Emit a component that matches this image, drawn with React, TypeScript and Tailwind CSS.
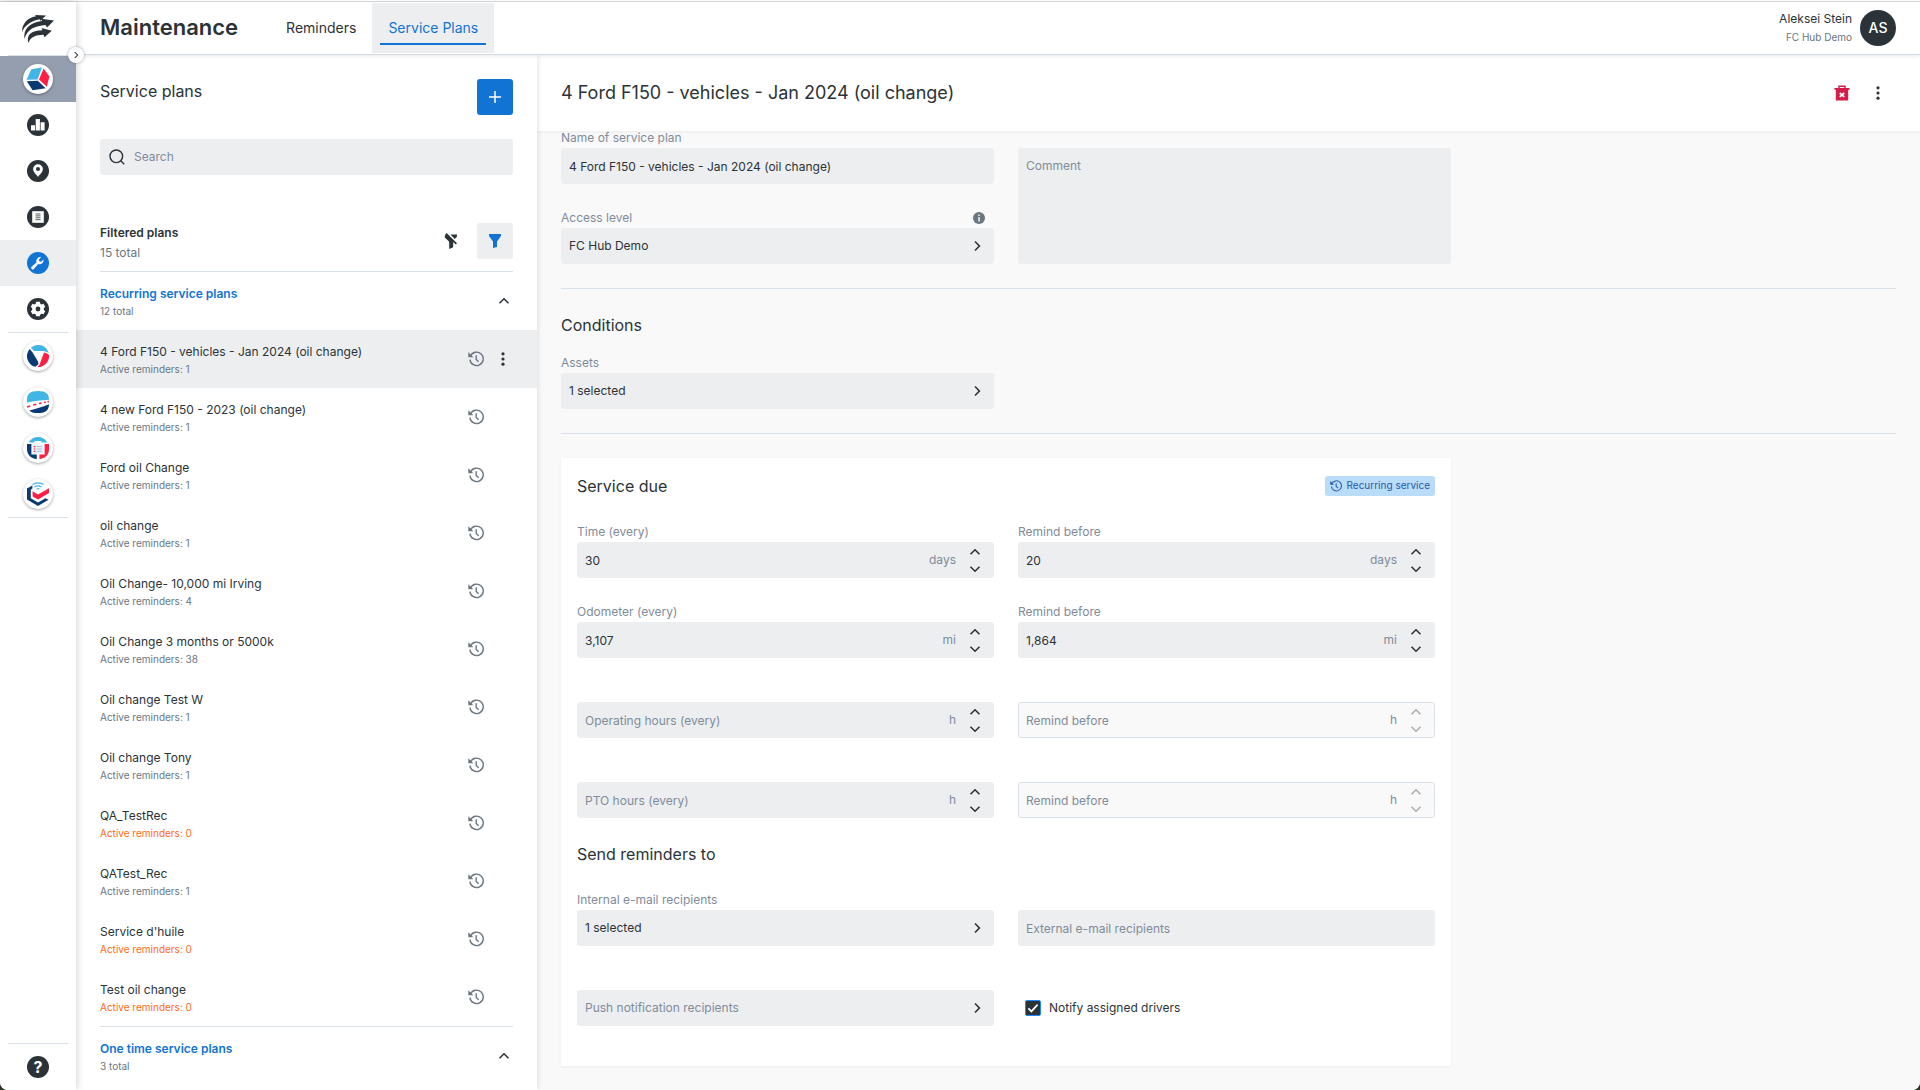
import { useState, type ReactNode } from "react";
import clsx from "clsx";

interface Plan {
  id: number;
  name: string;
  reminders: number;
}

const recurringPlans: Plan[] = [
  { id: 1, name: "4 Ford F150 - vehicles - Jan 2024 (oil change)", reminders: 1 },
  { id: 2, name: "4 new Ford F150 - 2023 (oil change)", reminders: 1 },
  { id: 3, name: "Ford oil Change", reminders: 1 },
  { id: 4, name: "oil change", reminders: 1 },
  { id: 5, name: "Oil Change- 10,000 mi Irving", reminders: 4 },
  { id: 6, name: "Oil Change 3 months or 5000k", reminders: 38 },
  { id: 7, name: "Oil change Test W", reminders: 1 },
  { id: 8, name: "Oil change Tony", reminders: 1 },
  { id: 9, name: "QA_TestRec", reminders: 0 },
  { id: 10, name: "QATest_Rec", reminders: 1 },
  { id: 11, name: "Service d'huile", reminders: 0 },
  { id: 12, name: "Test oil change", reminders: 0 },
];

/* ---------- Icons ---------- */

type ChevronProps = {
  direction: "up" | "down" | "right";
  className?: string;
};

const chevronPaths = {
  up: "M1.5 8.2 6 3.8l4.5 4.4",
  down: "M1.5 3.8 6 8.2l4.5-4.4",
  right: "M4 1.5 8.4 6 4 10.5",
};

function Chevron({ direction, className = "size-3" }: ChevronProps) {
  return (
    <svg viewBox="0 0 12 12" className={className} fill="none" aria-hidden="true">
      <path d={chevronPaths[direction]} stroke="currentColor" strokeWidth="1.6" />
    </svg>
  );
}

function HistoryIcon({ className = "size-4" }: { className?: string }) {
  return (
    <svg viewBox="0 0 16 16" className={className} fill="none" aria-hidden="true">
      <path
        d="M2.4 5.2A6.7 6.7 0 1 1 1.9 8.6"
        stroke="currentColor"
        strokeWidth="1.4"
      />
      <path d="M.3 1.2v5h5z" fill="currentColor" />
      <path d="M8.2 4.2v4.2l2.4 2.4" stroke="currentColor" strokeWidth="1.4" />
    </svg>
  );
}

function DotsIcon() {
  return (
    <svg viewBox="0 0 4 16" className="h-4 w-1" fill="currentColor" aria-hidden="true">
      <circle cx="2" cy="2.8" r="1.6" />
      <circle cx="2" cy="8" r="1.6" />
      <circle cx="2" cy="13.2" r="1.6" />
    </svg>
  );
}

function SearchIcon() {
  return (
    <svg viewBox="0 0 16 16" className="size-4" fill="none" aria-hidden="true">
      <circle cx="7.3" cy="7.3" r="6.3" stroke="#2b3338" strokeWidth="1.4" />
      <path d="m11.8 11.8 3.4 3.4" stroke="#2b3338" strokeWidth="1.4" />
    </svg>
  );
}

function TrashIcon() {
  return (
    <svg viewBox="0 0 16 16" className="size-4" fill="none" aria-hidden="true">
      <path d="M5 3.4V1.2h6v2.2" stroke="#d31c48" strokeWidth="1.4" />
      <path d="M.4 3h15.2v1.8h-1.400v10.800H1.800V4.800H.4z" fill="#d31c48" />
      <path d="m5.800 8 4.400 3.800M10.200 8l-4.400 3.800" stroke="#fff" strokeWidth="1.7" />
    </svg>
  );
}

function FilterIcon() {
  return (
    <svg viewBox="0 0 14 16" className="h-4 w-3.5" aria-hidden="true">
      <path d="M1 1h12v2L9 8.4V14l-4 1V8.4L1 3z" fill="#1174d4" />
    </svg>
  );
}

function FilterOffIcon() {
  return (
    <svg viewBox="0 0 14 16" className="h-4 w-3.5" aria-hidden="true">
      <path
        d="M2.6 0 13 10.200l-1.200 1.200L9.200 9v5.200L5.200 16V8.800L.8 4.400V2.200h1L1.200 1.400zM6.400 1.600H13v2L10.800 6z"
        fill="#2b3338"
      />
    </svg>
  );
}

function InfoIcon() {
  return (
    <svg viewBox="0 0 12 12" className="size-3" aria-hidden="true">
      <circle cx="6" cy="6" r="6" fill="#6b7680" />
      <path d="M5.2 2.6h1.7v1.5H5.2zM5.2 5h1.7v4.4H5.2z" fill="#e6e9ec" />
    </svg>
  );
}

function BrandLogo() {
  return (
    <svg viewBox="0 0 32 28" className="h-7 w-8" fill="#2b3338" aria-hidden="true">
      <path d="M0 17C0 9 5 3 14 1.300L13 0l11 .5-5.500 5.200-1-1.500C9 6 3 10 0 17z" />
      <path d="M2.600 24C.8 14 8 7.600 20 6l-1-2.200 13 1.700-7 7-1.500-2.400C13 11.200 5 14 2.600 24z" />
      <path d="M6.500 28C4 20 9 15.200 20.400 15.200L19.500 13l10.300 2.800-7.300 6.400-1-2.400C14 20 8 22 6.500 28z" />
    </svg>
  );
}

function RailIcon({ children, color = "#2b3338" }: { children: ReactNode; color?: string }) {
  return (
    <svg viewBox="0 0 22 22" className="size-[22px]" aria-hidden="true">
      <circle cx="11" cy="11" r="11" fill={color} />
      {children}
    </svg>
  );
}

function AppIcon({ children }: { children: ReactNode }) {
  return (
    <span className="flex size-[30px] items-center justify-center rounded-full bg-white shadow-[0_1px_3px_rgba(0,0,0,0.35)]">
      <svg viewBox="0 0 24 24" className="size-6" aria-hidden="true">
        {children}
      </svg>
    </span>
  );
}

const railItems = [
  {
    label: "Reports",
    icon: (
      <RailIcon>
        <path d="M4 11.200h4V16.500H4zM8.700 5h4.200v11.500H8.700zM13.600 8.200h4v8.300h-4z" fill="#fff" />
      </RailIcon>
    ),
  },
  {
    label: "Map",
    icon: (
      <RailIcon>
        <path
          d="M11 4.200a4.900 4.900 0 0 1 4.900 4.900c0 3.200-3.200 5.400-4.900 7.900-1.700-2.500-4.900-4.700-4.900-7.900A4.900 4.900 0 0 1 11 4.200z"
          fill="#fff"
        />
        <circle cx="11" cy="9" r="2" fill="#2b3338" />
      </RailIcon>
    ),
  },
  {
    label: "Lists",
    icon: (
      <RailIcon>
        <path d="M5.200 5.200h11.600v11.600H5.200z" fill="#fff" />
        <path d="M8.500 8h5M8.500 9.900h5M8.500 11.800h5M8.500 13.700h5" stroke="#2b3338" strokeWidth=".8" />
      </RailIcon>
    ),
  },
  {
    label: "Maintenance",
    active: true,
    icon: (
      <RailIcon color="#1174d4">
        <path
          d="M16.500 7.400a4.100 4.100 0 0 1-5.300 4.700l-4.400 4.800a1.500 1.500 0 0 1-2.200-2.100l4.800-4.400a4.100 4.100 0 0 1 4.700-5.200l-2.200 2.400.4 1.700 1.800.4z"
          fill="#fff"
        />
      </RailIcon>
    ),
  },
  {
    label: "Settings",
    icon: (
      <RailIcon>
        <path
          d="M9.200 3.800h3.600l.5 1.900 1.300.7 1.900-.6 1.700 3-1.400 1.400v1.700l1.400 1.400-1.700 3-1.900-.6-1.300.7-.5 1.900H9.200l-.5-1.900-1.300-.7-1.900.6-1.700-3 1.400-1.400v-1.700L3.800 8.800l1.700-3 1.900.6 1.300-.7z"
          fill="#fff"
        />
        <circle cx="11" cy="11" r="2.400" fill="#2b3338" />
      </RailIcon>
    ),
  },
];

const appItems = [
  {
    label: "Tracking",
    icon: (
      <AppIcon>
        <path d="M4.800 3.800A11 11 0 0 1 22.800 9c-3-1.600-5.600-1.900-8.400-1.900H8.200z" fill="#41b6e6" />
        <path d="M3.600 5A11 11 0 0 0 9.400 22.800l2.800-2.600c.4-1.200.1-2.100-.5-3.200L6.300 8z" fill="#0a3a73" />
        <path d="M18 8.600c1.800.4 3.400 1.100 5 2.300A11 11 0 0 1 11 23c1.700-.9 2.400-2.200 3-3.800z" fill="#ff1f45" />
      </AppIcon>
    ),
  },
  {
    label: "Roads",
    icon: (
      <AppIcon>
        <path d="M1 12.600V10C1 4 4 1 12 1s11 3 11 8.400v.4c-8 .6-15 1.400-22 2.800z" fill="#41b6e6" />
        <path
          d="m1 17 3.200-1M7.200 15l3.200-.8M13 13.600l2.600-.6M18 12.500l1.800-.4M21.500 11.800l1.500-.3"
          stroke="#ff1f45"
          strokeWidth="1.500"
        />
        <path d="M23 14.200c0 5.800-3 8.800-11 8.800-4.400 0-7.200-.9-8.800-2.600C10 19.200 16 16.800 23 14.200z" fill="#0a3a73" />
      </AppIcon>
    ),
  },
  {
    label: "Logbook",
    icon: (
      <AppIcon>
        <path d="M2.600 6.400C5 2.600 8.400 1 12 1s7 1.600 9.400 5.400h-5.800V5H8.400v1.400z" fill="#41b6e6" />
        <path d="M1 8h4.400v10.400h5.400V23C5 22.600 1 18.800 1 13z" fill="#0a3a73" />
        <path d="M18.600 8H23v5c0 6-4 9.600-9.600 10v-4.600h5.200z" fill="#ff1f45" />
        <path d="M6.400 7.400h2v1.200h7.200V7.400h2v10H6.400z" fill="#e4f4fb" />
        <path d="M7.800 10.600h1.600M7.800 13h1.600M7.800 15.400h1.600" stroke="#ff1f45" strokeWidth="1.200" />
        <path d="M10.800 10.600H16M10.800 13H16M10.800 15.400H16" stroke="#9fb2ca" strokeWidth=".8" />
      </AppIcon>
    ),
  },
  {
    label: "Security",
    icon: (
      <AppIcon>
        <path
          d="M6.400 2.600c3.500-2.200 7.700-2.200 11.200 0M8.400 4.900c2.300-1.300 4.900-1.300 7.200 0M10.600 7c.9-.5 1.900-.5 2.800 0"
          stroke="#41b6e6"
          strokeWidth="1.200"
          fill="none"
        />
        <path d="M1 6.600 6.400 3.400v3L4.800 7.600v8.600l7.200 4.200 7.400-4.200 3.200 1.600L12 24 1 17.600z" fill="#0a3a73" />
        <path d="m6.600 9.200 5.400 3.200L23 6.200V11l-11 6.600L6.600 14.400z" fill="#ff1f45" />
      </AppIcon>
    ),
  },
];

/* ---------- Form fields ---------- */

const labelClass = "block h-5 leading-5 text-[#7f8c99]";

interface NumberFieldProps {
  id: string;
  label: string;
  unit: string;
  defaultValue?: string;
  disabled?: boolean;
}

// An empty field shows its label as a placeholder inside the box
function NumberField({ id, label, unit, defaultValue = "", disabled = false }: NumberFieldProps) {
  const [value, setValue] = useState(defaultValue);

  const step = (amount: number) => {
    const current = Number(value.replace(/,/g, "")) || 0;
    setValue(Math.max(0, current + amount).toLocaleString("en-US"));
  };

  return (
    <div className="mb-6">
      <label htmlFor={id} className={labelClass}>
        {value && label}
      </label>
      <div
        className={clsx(
          "flex h-9 items-center rounded-[3px] border",
          disabled ? "border-[#dae1e8] bg-[#f9f9f9]" : "border-[#edeef0] bg-[#edeef0]"
        )}
      >
        <input
          id={id}
          type="text"
          inputMode="numeric"
          aria-label={label}
          value={value}
          placeholder={label}
          disabled={disabled}
          onChange={(e) => setValue(e.target.value)}
          className="h-full min-w-0 flex-1 bg-transparent pl-[7px] outline-none placeholder:text-[#7f8c99]"
        />
        <span className="text-[#7f8c99]">{unit}</span>
        <div
          className={clsx(
            "mr-3 ml-[13px] flex h-full flex-col justify-center gap-[5px]",
            disabled && "text-[#a7adb3]"
          )}
        >
          <button type="button" aria-label={`Increase ${label}`} disabled={disabled} onClick={() => step(1)}>
            <Chevron direction="up" />
          </button>
          <button type="button" aria-label={`Decrease ${label}`} disabled={disabled} onClick={() => step(-1)}>
            <Chevron direction="down" />
          </button>
        </div>
      </div>
    </div>
  );
}

interface PickerFieldProps {
  id: string;
  label: string;
  value?: string;
  info?: boolean;
}

function PickerField({ id, label, value, info = false }: PickerFieldProps) {
  return (
    <div className="mb-6">
      <div className="flex justify-between pr-[9px]">
        <label htmlFor={id} className={labelClass}>
          {value && label}
        </label>
        {info && (
          <span className="pt-1">
            <InfoIcon />
          </span>
        )}
      </div>
      <button
        id={id}
        type="button"
        className="flex h-9 w-full items-center justify-between rounded-[3px] bg-[#edeef0] pr-[11px] pl-2 text-left"
      >
        <span className={value ? "" : "text-[#7f8c99]"}>{value || label}</span>
        <Chevron direction="right" />
      </button>
    </div>
  );
}

/* ---------- Page sections ---------- */

function SideRail() {
  return (
    <nav className="relative z-30 flex w-[76px] shrink-0 flex-col bg-white shadow-[0_0_8px_rgba(0,0,0,0.22)]">
      <a href="#home" aria-label="Home" className="ml-2 flex h-[54px] items-center border-b border-[#dae1e8] pl-3.5">
        <BrandLogo />
      </a>
      <button
        type="button"
        aria-label="Expand menu"
        className="absolute top-[45px] -right-2 flex size-4 items-center justify-center rounded-full bg-white shadow-[0_0_3px_rgba(60,80,110,0.5)]"
      >
        <Chevron direction="right" className="size-2" />
      </button>
      <a href="#fleet" aria-label="Fleet" className="flex h-[46px] items-center justify-center bg-[#949eae]">
        <AppIcon>
          <path d="M5.200 2.200 16 .6 11.600 12.400.600 12.800z" fill="#41b6e6" />
          <path d="M17.600 1.400 23.400 9.400 20.800 19.800 13 12.600z" fill="#ff1f45" />
          <path d="M.8 14.200 11.800 13.800 19.600 21.200 6.600 23.200z" fill="#0a3a73" />
        </AppIcon>
      </a>
      {railItems.map((item) => (
        <a
          key={item.label}
          href={`#${item.label.toLowerCase()}`}
          aria-label={item.label}
          className={clsx("flex h-[46px] items-center justify-center", item.active && "bg-[#edeef0]")}
        >
          {item.icon}
        </a>
      ))}
      <div className="mx-2 border-y border-[#dae1e8]">
        {appItems.map((item) => (
          <a
            key={item.label}
            href={`#${item.label.toLowerCase()}`}
            aria-label={item.label}
            className="flex h-[46px] items-center justify-center"
          >
            {item.icon}
          </a>
        ))}
      </div>
      <a
        href="#help"
        aria-label="Help"
        className="mx-2 mt-auto flex h-[47px] items-center justify-center border-t border-[#dae1e8]"
      >
        <span className="flex size-[22px] items-center justify-center rounded-full bg-[#2b3338] text-base font-bold text-white">
          ?
        </span>
      </a>
    </nav>
  );
}

function TopBar() {
  return (
    <header className="relative z-20 flex h-[53px] shrink-0 items-center border-b border-[#d5dce4] bg-white px-6 shadow-[0_1px_4px_rgba(0,0,0,0.1)]">
      <h1 className="text-[22px] font-semibold">Maintenance</h1>
      <nav className="ml-8 flex text-sm">
        <a href="#reminders" className="flex h-[50px] items-end px-2 pb-2">
          <span className="flex h-8 items-center border-b-2 border-transparent px-2">Reminders</span>
        </a>
        <a href="#service-plans" className="flex h-[50px] items-end bg-[#edeef0] px-2 pb-2 text-[#1174d4]">
          <span className="flex h-8 items-center border-b-2 border-[#1174d4] px-2">Service Plans</span>
        </a>
      </nav>
      <div className="ml-auto flex items-center gap-2">
        <div className="text-right leading-[18px]">
          <p>Aleksei Stein</p>
          <p className="text-[10px] text-[#6b7680]">FC Hub Demo</p>
        </div>
        <span className="flex size-9 items-center justify-center rounded-full bg-[#2b3338] text-sm font-medium text-white">
          AS
        </span>
      </div>
    </header>
  );
}

function GroupHeader({ title, count }: { title: string; count: number }) {
  return (
    <button type="button" className="flex w-full items-center justify-between py-3 pr-[3px] text-left">
      <span>
        <span className="block leading-5 font-semibold text-[#1174d4]">{title}</span>
        <span className="block text-[10px] leading-[14px] text-[#6b7680]">{count} total</span>
      </span>
      <Chevron direction="up" />
    </button>
  );
}

interface PlanListProps {
  selectedId: number;
  onSelect: (id: number) => void;
}

function PlanList({ selectedId, onSelect }: PlanListProps) {
  return (
    <aside className="relative z-10 w-[461px] shrink-0 overflow-hidden bg-white px-6 pt-6 shadow-[0_0_6px_rgba(0,0,0,0.15)]">
      <div className="flex items-start justify-between">
        <h2 className="text-base leading-6">Service plans</h2>
        <button
          type="button"
          aria-label="Add service plan"
          className="flex size-9 items-center justify-center rounded-[3px] bg-[#1174d4]"
        >
          <svg viewBox="0 0 12 12" className="size-3" aria-hidden="true">
            <path d="M6 0v12M0 6h12" stroke="#fff" strokeWidth="1.500" />
          </svg>
        </button>
      </div>

      <label className="mt-6 flex h-9 items-center gap-[9px] rounded-[3px] bg-[#edeef0] px-[9px]">
        <SearchIcon />
        <input
          type="search"
          aria-label="Search"
          placeholder="Search"
          className="min-w-0 flex-1 bg-transparent outline-none placeholder:text-[#7f8c99]"
        />
      </label>

      <div className="mt-12 flex items-start justify-between border-b border-[#dae1e8] pb-2 leading-5">
        <div>
          <h3 className="font-semibold">Filtered plans</h3>
          <p className="text-[#6b7680]">15 total</p>
        </div>
        <div className="flex gap-2">
          <button type="button" aria-label="Clear filter" className="flex size-9 items-center justify-center">
            <FilterOffIcon />
          </button>
          <button
            type="button"
            aria-label="Filter"
            className="flex size-9 items-center justify-center rounded-[3px] bg-[#edeef0]"
          >
            <FilterIcon />
          </button>
        </div>
      </div>

      <GroupHeader title="Recurring service plans" count={12} />
      <ul className="-mx-6">
        {recurringPlans.map((plan) => {
          const selected = plan.id === selectedId;
          return (
            <li key={plan.id} className={clsx("flex items-center px-6", selected && "bg-[#edeef0]")}>
              <button type="button" onClick={() => onSelect(plan.id)} className="flex-1 py-3 text-left">
                <span className="block leading-5">{plan.name}</span>
                <span
                  className={clsx(
                    "block text-[10px] leading-[14px]",
                    plan.reminders === 0 ? "text-[#ff6a13]" : "text-[#6b7680]"
                  )}
                >
                  Active reminders: {plan.reminders}
                </span>
              </button>
              <span className="text-[#6b7680]">
                <HistoryIcon />
              </span>
              <span className="flex w-[29px] justify-end pr-2">
                {selected && (
                  <button type="button" aria-label="Plan options">
                    <DotsIcon />
                  </button>
                )}
              </span>
            </li>
          );
        })}
      </ul>
      <div className="border-t border-[#dae1e8]">
        <GroupHeader title="One time service plans" count={3} />
      </div>
    </aside>
  );
}

function PlanDetails({ name }: { name: string }) {
  return (
    <main className="min-w-0 flex-1 overflow-hidden bg-[#f9f9f9]">
      <div className="relative z-[5] flex h-[77px] items-center justify-between border-b border-[#f0f1f2] bg-white px-6 shadow-[0_1px_2px_rgba(0,0,0,0.04)]">
        <h2 className="text-lg">{name}</h2>
        <div className="flex items-center">
          <button type="button" aria-label="Delete service plan" className="flex size-9 items-center justify-center">
            <TrashIcon />
          </button>
          <button type="button" aria-label="More options" className="flex size-9 items-center justify-center">
            <DotsIcon />
          </button>
        </div>
      </div>

      <form className="-mt-1 px-6 pb-6" onSubmit={(e) => e.preventDefault()}>
        <section className="grid w-2/3 grid-cols-2 gap-x-6">
          <div>
            <div className="mb-6">
              <label htmlFor="plan-name" className={labelClass}>
                Name of service plan
              </label>
              <input
                key={name}
                id="plan-name"
                type="text"
                defaultValue={name}
                className="h-9 w-full rounded-[3px] bg-[#edeef0] px-2 outline-none"
              />
            </div>
            <PickerField id="access-level" label="Access level" value="FC Hub Demo" info />
          </div>
          <textarea
            aria-label="Comment"
            placeholder="Comment"
            className="mt-5 mb-6 resize-none rounded-[3px] bg-[#edeef0] px-2 py-[9px] leading-[18px] outline-none placeholder:text-[#7f8c99]"
          />
        </section>

        <section className="border-y border-[#dae1e8] pt-6">
          <h3 className="mb-4 text-base leading-6">Conditions</h3>
          <div className="grid w-2/3 grid-cols-2 gap-x-6">
            <PickerField id="assets" label="Assets" value="1 selected" />
          </div>
        </section>

        <section className="mt-6 w-2/3 bg-white p-4 shadow-[0_1px_3px_rgba(0,0,0,0.05)]">
          <div className="mb-6 flex items-center justify-between">
            <h3 className="text-base leading-6">Service due</h3>
            <span className="flex h-5 items-center gap-[5px] rounded-[3px] bg-[#b9dcf9] px-[5px] text-[10px] text-[#2858b0]">
              <HistoryIcon className="size-3" />
              Recurring service
            </span>
          </div>
          <div className="grid grid-cols-2 gap-x-6">
            <NumberField id="time" label="Time (every)" unit="days" defaultValue="30" />
            <NumberField id="time-remind" label="Remind before" unit="days" defaultValue="20" />
            <NumberField id="odometer" label="Odometer (every)" unit="mi" defaultValue="3,107" />
            <NumberField id="odometer-remind" label="Remind before" unit="mi" defaultValue="1,864" />
            <NumberField id="hours" label="Operating hours (every)" unit="h" />
            <NumberField id="hours-remind" label="Remind before" unit="h" disabled />
            <NumberField id="pto" label="PTO hours (every)" unit="h" />
            <NumberField id="pto-remind" label="Remind before" unit="h" disabled />
          </div>

          <h3 className="mb-6 text-base leading-6">Send reminders to</h3>
          <div className="grid grid-cols-2 gap-x-6">
            <PickerField id="internal-recipients" label="Internal e-mail recipients" value="1 selected" />
            <div className="mb-6 pt-5">
              <input
                type="text"
                aria-label="External e-mail recipients"
                placeholder="External e-mail recipients"
                className="h-9 w-full rounded-[3px] bg-[#edeef0] px-2 outline-none placeholder:text-[#7f8c99]"
              />
            </div>
            <PickerField id="push-recipients" label="Push notification recipients" />
            <div className="mb-6 pt-5">
              <label className="flex h-9 items-center gap-2 pl-[7px]">
                <span className="relative flex size-4">
                  <input
                    type="checkbox"
                    defaultChecked
                    className="peer size-4 appearance-none rounded-[2px] border border-[#1e88ff] bg-white checked:bg-[#2b3338]"
                  />
                  <svg
                    viewBox="0 0 16 16"
                    className="pointer-events-none absolute inset-0 hidden size-4 peer-checked:block"
                    fill="none"
                    aria-hidden="true"
                  >
                    <path d="m3.400 8.400 3 3 6.200-6.800" stroke="#fff" strokeWidth="1.700" />
                  </svg>
                </span>
                Notify assigned drivers
              </label>
            </div>
          </div>
        </section>
      </form>
    </main>
  );
}

export default function App() {
  const [selectedId, setSelectedId] = useState(1);
  const selectedPlan = recurringPlans.find((plan) => plan.id === selectedId) ?? recurringPlans[0];

  return (
    <div className="min-h-screen bg-[#2f3626] font-['Inter','Liberation_Sans',sans-serif] text-xs text-[#2b3338]">
      <div className="flex min-h-screen flex-col overflow-hidden rounded-b-lg bg-white pt-px">
        <div className="flex flex-1 border-t border-[#d8dadc]">
          <SideRail />
          <div className="flex min-w-0 flex-1 flex-col">
            <TopBar />
            <div className="flex flex-1">
              <PlanList selectedId={selectedId} onSelect={setSelectedId} />
              <PlanDetails name={selectedPlan.name} />
            </div>
          </div>
        </div>
      </div>
    </div>
  );
}
